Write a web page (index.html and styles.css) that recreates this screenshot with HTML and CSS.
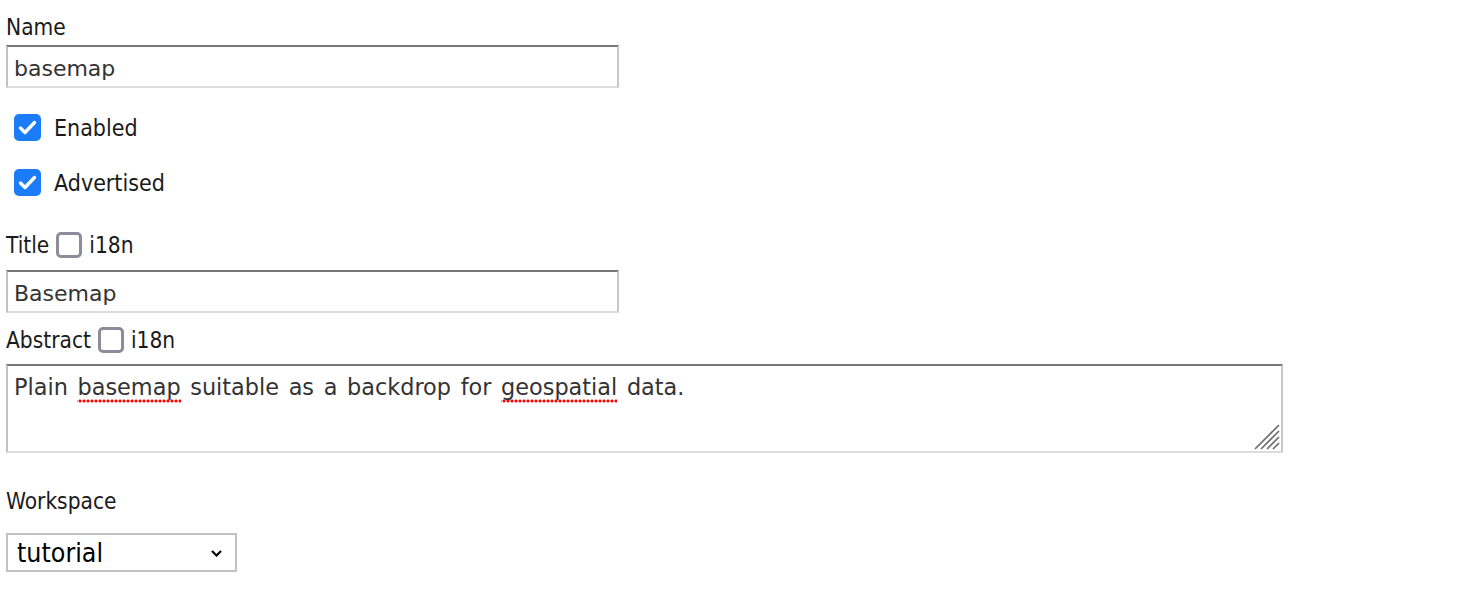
FILE: index.html
```html
<!DOCTYPE html>
<html>
<head>
<meta charset="utf-8">
<link rel="stylesheet" href="styles.css">
</head>
<body>
<form class="form">
  <div class="label label-name">Name</div>
  <input class="text-input" type="text" value="basemap">

  <div class="check-row row-enabled">
    <span class="cb cb-on"><svg width="27" height="27" viewBox="0 0 27 27"><path d="M6.5 14 L11 18.5 L20.5 8.5" fill="none" stroke="#fff" stroke-width="3.4" stroke-linecap="round" stroke-linejoin="round"/></svg></span>
    <span class="check-text">Enabled</span>
  </div>
  <div class="check-row row-advertised">
    <span class="cb cb-on"><svg width="27" height="27" viewBox="0 0 27 27"><path d="M6.5 14 L11 18.5 L20.5 8.5" fill="none" stroke="#fff" stroke-width="3.4" stroke-linecap="round" stroke-linejoin="round"/></svg></span>
    <span class="check-text">Advertised</span>
  </div>

  <div class="i18n-row row-title">
    <span class="label">Title</span>
    <span class="cb cb-off"></span>
    <span class="label">i18n</span>
  </div>
  <input class="text-input title-input" type="text" value="Basemap">

  <div class="i18n-row row-abstract">
    <span class="label">Abstract</span>
    <span class="cb cb-off"></span>
    <span class="label">i18n</span>
  </div>
  <div class="area-wrap">
    <div class="area">Plain <span class="sp">basemap</span> suitable as a backdrop for <span class="sp">geospatial</span> data.</div>
    <svg class="grip" width="28" height="28" viewBox="0 0 28 28">
      <g stroke="#6e6e6e" stroke-width="1.7">
        <line x1="3" y1="27" x2="27" y2="3"/>
        <line x1="9" y1="27" x2="27" y2="9"/>
        <line x1="15" y1="27" x2="27" y2="15"/>
        <line x1="21" y1="27" x2="27" y2="21"/>
      </g>
    </svg>
  </div>

  <div class="label label-ws">Workspace</div>
  <div class="select">
    <span class="select-text">tutorial</span>
    <svg class="chev" width="11" height="7" viewBox="0 0 11 7"><path d="M1 1 L5.5 5.5 L10 1" fill="none" stroke="#000" stroke-width="2.2"/></svg>
  </div>
</form>
</body>
</html>
```

FILE: styles.css
```css
html, body {
  margin: 0;
  padding: 0;
  background: #fff;
}
.form {
  display: flex;
  flex-direction: column;
  align-items: flex-start;
  padding: 14px 6px 0 6px;
  font-family: "DejaVu Sans Condensed", "DejaVu Sans", sans-serif;
  font-size: 22.5px;
  color: #1a1a1a;
}
.label {
  line-height: 26px;
  font-family: "DejaVu Sans Condensed", "DejaVu Sans", sans-serif;
  font-size: 22.5px;
  color: #1a1a1a;
}
.label-name {
  margin-bottom: 5px;
}
.text-input {
  box-sizing: border-box;
  width: 613px;
  height: 43px;
  margin: 0;
  padding: 3px 6px 0 6px;
  border-style: solid;
  border-width: 2px;
  border-top-color: #777;
  border-left-color: #c2c2c2;
  border-right-color: #c8c8c8;
  border-bottom-color: #dcdcdc;
  border-radius: 0;
  font-family: "DejaVu Sans", sans-serif;
  font-size: 22px;
  color: #333;
  background: #fff;
  outline: none;
}
.check-row {
  display: flex;
  align-items: center;
  height: 27px;
  padding-left: 8px;
}
.row-enabled {
  margin-top: 26px;
}
.row-advertised {
  margin-top: 28px;
}
.check-text {
  margin-left: 13px;
  line-height: 27px;
  font-size: 23px;
  color: #1a1a1a;
  position: relative;
  top: 1px;
}
.cb {
  display: inline-block;
  box-sizing: border-box;
  flex: none;
}
.cb-on {
  width: 27px;
  height: 27px;
  border-radius: 5px;
  background: #1a7cf7;
}
.cb-on svg {
  display: block;
}
.cb-off {
  width: 26px;
  height: 26px;
  border: 3px solid #8e8c9b;
  border-radius: 5px;
  background: #fff;
}
.i18n-row {
  display: flex;
  align-items: center;
  gap: 7px;
  height: 26px;
}
.row-title {
  margin-top: 36px;
}
.title-input {
  margin-top: 12px;
}
.row-abstract {
  margin-top: 14px;
}
.area-wrap {
  position: relative;
  margin-top: 11px;
}
.area {
  box-sizing: border-box;
  width: 1277px;
  height: 89px;
  padding: 8px 6px;
  border-style: solid;
  border-width: 2px;
  border-top-color: #777;
  border-left-color: #c2c2c2;
  border-right-color: #c8c8c8;
  border-bottom-color: #dcdcdc;
  font-family: "DejaVu Sans", sans-serif;
  font-size: 22.4px;
  word-spacing: 2.5px;
  line-height: 26px;
  color: #333;
}
.sp {
  background-image: radial-gradient(circle, #ff0000 1.4px, transparent 1.7px);
  background-size: 4px 4px;
  background-repeat: repeat-x;
  background-position: 1px 100%;
  padding-bottom: 3px;
}
.grip {
  position: absolute;
  right: 3px;
  bottom: 3px;
  display: block;
}
.label-ws {
  margin-top: 35px;
}
.select {
  box-sizing: border-box;
  margin-top: 19px;
  width: 231px;
  height: 39px;
  border: 2px solid #c2c2c2;
  display: flex;
  align-items: center;
  justify-content: space-between;
  padding: 0 13px 0 9px;
  background: #fff;
}
.select-text {
  font-family: "DejaVu Sans Condensed", "DejaVu Sans", sans-serif;
  font-size: 26.5px;
  line-height: 30px;
  color: #000;
}
.chev {
  display: block;
  margin-top: 2px;
}
```
